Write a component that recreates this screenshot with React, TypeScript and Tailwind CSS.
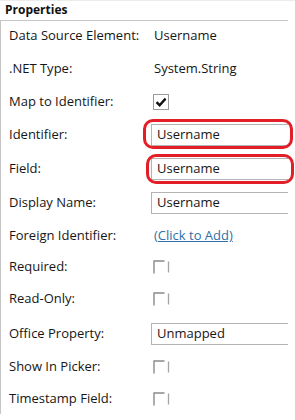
type Row =
  | { label: string; h: string; kind: 'text'; value: string }
  | { label: string; h: string; kind: 'input'; value: string }
  | { label: string; h: string; kind: 'link'; value: string }
  | { label: string; h: string; kind: 'check'; checked: boolean };

const ROWS: Row[] = [
  { label: 'Data Source Element:', h: 'h-[33px]', kind: 'text', value: 'Username' },
  { label: '.NET Type:', h: 'h-[33px]', kind: 'text', value: 'System.String' },
  { label: 'Map to Identifier:', h: 'h-[33px]', kind: 'check', checked: true },
  { label: 'Identifier:', h: 'h-[34px]', kind: 'input', value: 'Username' },
  { label: 'Field:', h: 'h-[34px]', kind: 'input', value: 'Username' },
  { label: 'Display Name:', h: 'h-[34px]', kind: 'input', value: 'Username' },
  { label: 'Foreign Identifier:', h: 'h-[31px]', kind: 'link', value: '(Click to Add)' },
  { label: 'Required:', h: 'h-[31px]', kind: 'check', checked: false },
  { label: 'Read-Only:', h: 'h-[34px]', kind: 'check', checked: false },
  { label: 'Office Property:', h: 'h-[35px]', kind: 'input', value: 'Unmapped' },
  { label: 'Show In Picker:', h: 'h-[32px]', kind: 'check', checked: false },
  { label: 'Timestamp Field:', h: 'h-[31px]', kind: 'check', checked: false },
];

function CheckBox({ checked }: { checked: boolean }) {
  if (checked) {
    return (
      <span className="ml-[2px] flex h-[16px] w-[16px] items-center justify-center border border-[#9a9a9a] bg-white">
        <svg width="12" height="10" viewBox="0 0 12 10">
          <path d="M1.5 5.2 L4.6 8.2 L10.6 1.6" fill="none" stroke="#111" strokeWidth="2.4" />
        </svg>
      </span>
    );
  }
  // worn-out looking empty box: top/left edge and a loose right stroke
  return (
    <svg width="17" height="14" viewBox="0 0 17 14" className="ml-[2px]">
      <path d="M1 13.5 V1 H11.5" fill="none" stroke="#8a8a8a" strokeWidth="1.4" />
      <path d="M15.5 1.5 V12.5" fill="none" stroke="#a4a4a4" strokeWidth="1.3" />
    </svg>
  );
}

function Value({ row }: { row: Row }) {
  switch (row.kind) {
    case 'text':
      return <span className="pl-[3px]">{row.value}</span>;
    case 'link':
      return <span className="pl-[3px] text-[#2f6fa8] underline decoration-[#2f6fa8]">{row.value}</span>;
    case 'input':
      return (
        <div className="flex h-[22px] w-[160px] items-center border-y border-l border-[#b4b4b4] bg-white pl-[5px]">
          {row.value}
        </div>
      );
    case 'check':
      return <CheckBox checked={row.checked} />;
  }
}

export default function App() {
  return (
    <div
      className="relative h-[420px] w-[295px] overflow-hidden bg-white text-[13px] text-[#161616]"
      style={{ fontFamily: '"Open Sans", "Noto Sans", sans-serif' }}
    >
      <div className="h-[20px] border-t border-[#ececec] pl-[5px] text-[12px] font-bold leading-[18px] text-[#111]">
        Properties
      </div>
      <div className="w-[288px] overflow-hidden border-l border-t border-[#c6c6c6]">
        <div className="-mt-[2px] flex flex-col">
          {ROWS.map((row) => (
            <div key={row.label} className={`flex items-center ${row.h}`}>
              <span className="w-[150px] shrink-0 pl-[8px]">{row.label}</span>
              <Value row={row} />
            </div>
          ))}
        </div>
      </div>

      {/* red annotation rings */}
      <div className="pointer-events-none absolute left-[143px] top-[119px] h-[30px] w-[150px] rounded-[10px] border-[3px] border-[#e41e26]" />
      <div className="pointer-events-none absolute left-[146px] top-[154px] h-[30px] w-[148px] rounded-[10px] border-[3px] border-[#e41e26]" />
    </div>
  );
}
